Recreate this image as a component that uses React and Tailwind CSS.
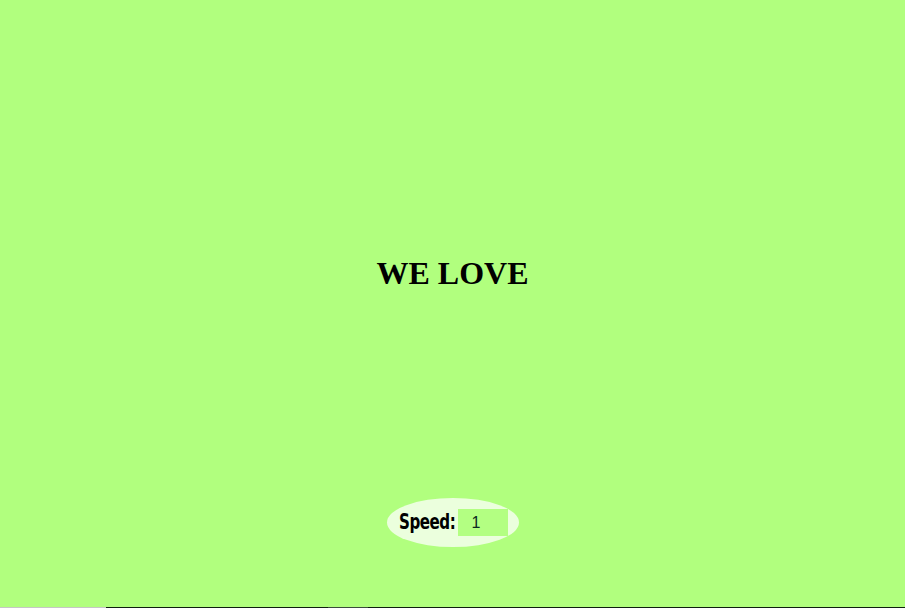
export default function App() {
  return (
    <div className="w-[905px] h-[608px] bg-[#b1ff7e] flex flex-col overflow-hidden">
      <div className="h-[607px] flex flex-col items-center">
        <h1 className="mt-[255px] text-[32px] leading-[37px] font-bold text-black" style={{ fontFamily: '"Liberation Serif", "Times New Roman", serif' }}>
          WE LOVE
        </h1>
        <div className="mt-[206px] w-[132px] h-[49px] rounded-[50%] bg-[#ebffdd] flex items-center pl-[12px]">
          <span className="text-[21px] leading-none font-bold text-black tracking-[-0.6px] scale-x-[0.8] origin-left w-[46px] whitespace-nowrap" style={{ fontFamily: 'Impact, "Liberation Sans Narrow", "DejaVu Sans Condensed", "Liberation Sans", sans-serif' }}>
            Speed:
          </span>
          <div className="ml-[13px] w-[50px] h-[27px] bg-[#b3ff82] flex items-center pl-[14px] text-[16px] text-[#0b2a22]" style={{ fontFamily: '"Liberation Sans", Arial, sans-serif' }}>
            1
          </div>
        </div>
      </div>
      <div className="h-px flex">
        <div className="w-[106px] bg-[#c6c6c6]" />
        <div className="w-[222px] bg-[#0f1f10]" />
        <div className="w-[40px] bg-[#3a4c3c]" />
        <div className="flex-1 bg-[#0f1f10]" />
      </div>
    </div>
  );
}
